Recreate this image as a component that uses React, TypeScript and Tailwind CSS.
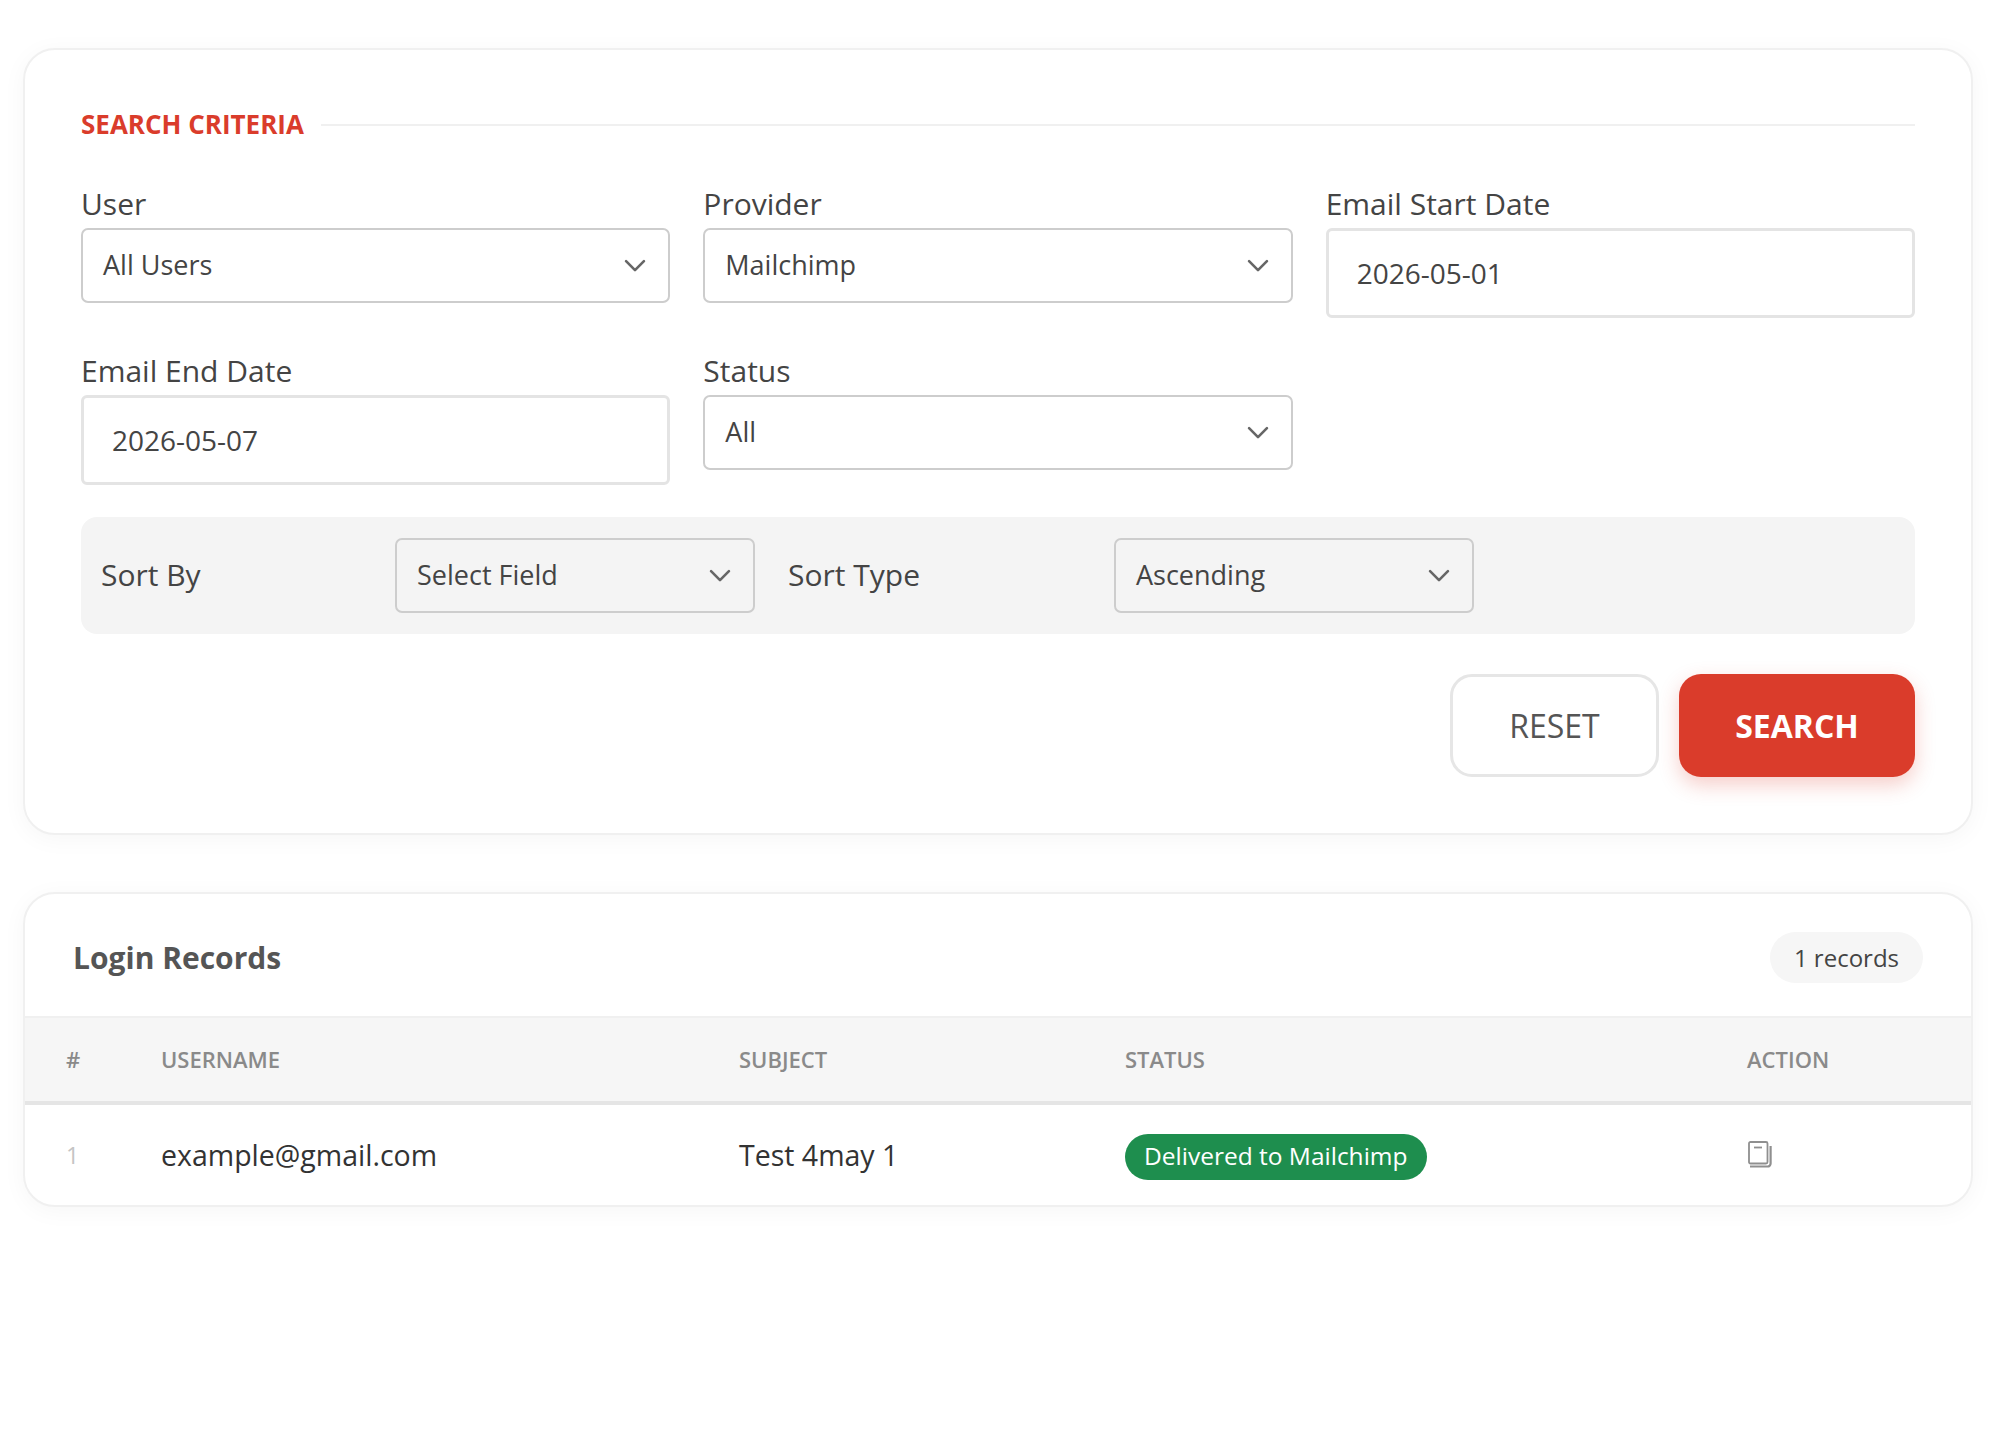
const SANS = "font-['Open_Sans',sans-serif]";

const Chevron = () => (
  <svg viewBox="0 0 16 16" className="h-[26px] w-[26px] shrink-0" fill="none" stroke="#666" strokeWidth="1.6" strokeLinecap="round" strokeLinejoin="round">
    <path d="m2.5 5 5.5 5.5L13.5 5" />
  </svg>
);

const Select = ({ value, className = "" }: { value: string; className?: string }) => (
  <div className={`flex h-[75px] items-center justify-between rounded-[7px] border-2 border-[#cdcdcd] pl-[20px] pr-[20px] text-[27px] text-[#444] ${className}`}>
    <span>{value}</span>
    <Chevron />
  </div>
);

const DateInput = ({ value }: { value: string }) => (
  <div className="flex h-[90px] items-center rounded-[6px] border-[3px] border-[#e4e4e4] pl-[28px] text-[28px] text-[#444]">
    {value}
  </div>
);

const Field = ({ label, children }: { label: string; children: React.ReactNode }) => (
  <div>
    <div className="mb-[4px] text-[30px] leading-[41px] text-[#444]">{label}</div>
    {children}
  </div>
);

const BookIcon = () => (
  <svg viewBox="0 0 24 27" className="h-[27px] w-[24px]" fill="none" stroke="#8f8f8f">
    <rect x="1" y="1" width="18.5" height="21.5" rx="1.5" strokeWidth="1.8" />
    <path d="M6 6.5h8" strokeWidth="1.8" />
    <path d="M22.6 5v17.5a3 3 0 0 1-3 3H2" strokeWidth="2.2" />
  </svg>
);

export default function App() {
  return (
    <div className={`min-h-[1453px] bg-white pl-[23px] pr-[31px] pt-[48px] ${SANS}`}>
      <div className="rounded-[32px] border-2 border-[#f0f0f0] bg-white px-[56px] pb-[56px] pt-[56px] shadow-[0_4px_24px_rgba(0,0,0,0.04)]">
        <div className="flex items-center">
          <span className="text-[26px] font-bold leading-[36px] text-[#da3c2b]">SEARCH CRITERIA</span>
          <div className="ml-[17px] mt-[1px] h-[2px] grow bg-[#f0f0f0]" />
        </div>

        <div className="mt-[41px] grid grid-cols-3 gap-x-[33px] gap-y-[32px]">
          <Field label="User">
            <Select value="All Users" />
          </Field>
          <Field label="Provider">
            <Select value="Mailchimp" />
          </Field>
          <Field label="Email Start Date">
            <DateInput value="2026-05-01" />
          </Field>
          <Field label="Email End Date">
            <DateInput value="2026-05-07" />
          </Field>
          <Field label="Status">
            <Select value="All" />
          </Field>
        </div>

        <div className="mt-[32px] flex h-[117px] items-center rounded-[16px] bg-[#f4f4f4] pl-[20px] text-[30px] text-[#444]">
          <div className="mb-[2px] w-[294px]">Sort By</div>
          <Select value="Select Field" className="w-[360px]" />
          <div className="mb-[2px] ml-[33px] w-[326px]">Sort Type</div>
          <Select value="Ascending" className="w-[360px]" />
        </div>

        <div className="mt-[40px] flex justify-end gap-[20px]">
          <div className="flex h-[103px] w-[209px] items-center justify-center rounded-[22px] border-[3px] border-[#e6e6e6] text-[32px] text-[#555]">
            RESET
          </div>
          <div className="flex h-[103px] w-[236px] items-center justify-center rounded-[22px] bg-[#da3c2b] text-[32px] font-bold text-white shadow-[0_8px_20px_rgba(218,60,43,0.25)]">
            SEARCH
          </div>
        </div>
      </div>

      <div className="mt-[57px] overflow-hidden rounded-[32px] border-2 border-[#f0f0f0] bg-white shadow-[0_4px_24px_rgba(0,0,0,0.04)]">
        <div className="flex h-[122px] items-center justify-between pl-[48px] pr-[48px] pt-[5px]">
          <span className="text-[30px] font-bold text-[#555]">Login Records</span>
          <span className="flex h-[51px] items-center rounded-full bg-[#f6f6f6] px-[24px] text-[24px] text-[#444]">1 records</span>
        </div>
        <div className="grid h-[89px] grid-cols-[95px_578px_386px_622px_1fr] items-center border-y-2 border-b-4 border-t-[#f0f0f0] border-b-[#e5e5e5] bg-[#f6f6f6] pl-[41px] text-[22px] font-semibold text-[#8a8a8a]">
          <div>#</div>
          <div>USERNAME</div>
          <div>SUBJECT</div>
          <div>STATUS</div>
          <div>ACTION</div>
        </div>
        <div className="grid h-[100px] grid-cols-[95px_578px_386px_622px_1fr] items-center pl-[41px] text-[28.5px] text-[#333]">
          <div className="text-[23px] text-[#c4c4c4]">1</div>
          <div>example@gmail.com</div>
          <div>Test 4may 1</div>
          <div>
            <span className="mt-[3px] inline-flex h-[46px] items-center rounded-full bg-[#1e8e4e] px-[19px] text-[24.5px] text-white">Delivered to Mailchimp</span>
          </div>
          <div className="mb-[2px] ml-[1px]"><BookIcon /></div>
        </div>
      </div>
    </div>
  );
}
